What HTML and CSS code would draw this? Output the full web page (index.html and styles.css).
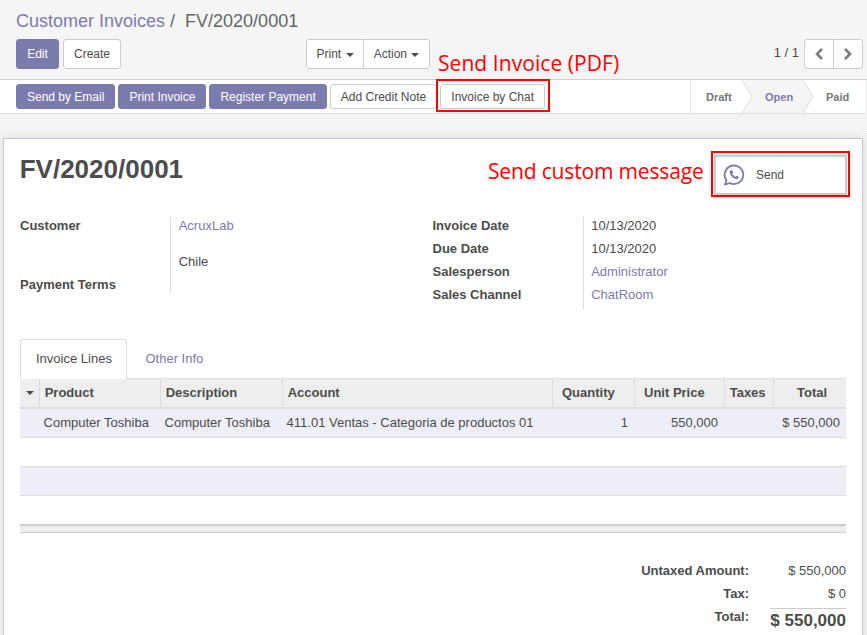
FILE: index.html
```html
<!DOCTYPE html>
<html lang="en">
<head>
<meta charset="utf-8">
<title>FV/2020/0001</title>
<link rel="stylesheet" href="styles.css">
</head>
<body>
<div class="page">
  <header class="control">
    <h1 class="crumbs"><a>Customer Invoices</a><span class="sep">/</span><span class="cur">FV/2020/0001</span></h1>
    <div class="actions">
      <div class="left">
        <button class="btn primary edit">Edit</button>
        <button class="btn create">Create</button>
      </div>
      <div class="group mid">
        <button class="btn print">Print <i class="caret"></i></button>
        <button class="btn action">Action <i class="caret"></i></button>
      </div>
      <div class="pager">
        <span class="count">1 / 1</span>
        <div class="group">
          <button class="btn arrow"><svg width="10" height="14" viewBox="0 0 10 14"><path d="M8 2 3 7l5 5" fill="none" stroke="#7c7c7c" stroke-width="2.600"/></svg></button>
          <button class="btn arrow"><svg width="10" height="14" viewBox="0 0 10 14"><path d="m2 2 5 5-5 5" fill="none" stroke="#7c7c7c" stroke-width="2.600"/></svg></button>
        </div>
      </div>
    </div>
  </header>

  <div class="statusbar">
    <div class="sb-buttons">
      <button class="btn primary small">Send by Email</button>
      <button class="btn primary small">Print Invoice</button>
      <button class="btn primary small">Register Payment</button>
      <button class="btn small">Add Credit Note</button>
      <button class="btn small chat">Invoice by Chat</button>
    </div>
    <div class="steps">
      <div class="step">Draft<svg class="chev" width="10" height="33" viewBox="0 0 10 33"><path d="M0 0 10 16.500 0 33Z" fill="#fff"/><path d="M0 0 10 16.500 0 33" fill="none" stroke="#dcdcdc"/></svg></div>
      <div class="step current">Open<svg class="chev" width="10" height="33" viewBox="0 0 10 33"><path d="M0 0 10 16.500 0 33Z" fill="#f5f5f5"/><path d="M0 0 10 16.500 0 33" fill="none" stroke="#dcdcdc"/></svg></div>
      <div class="step">Paid</div>
    </div>
  </div>

  <main class="backdrop">
    <section class="sheet">
      <div class="head">
        <h2 class="title">FV/2020/0001</h2>
        <button class="stat">
          <svg width="22" height="22" viewBox="0 0 22 22" class="wa"><path d="M11 1.500a9.300 9.300 0 0 1 0 18.600c-1.600 0-3-.4-4.300-1.100l-4.700 1.700 1.400-4.500A9.300 9.300 0 0 1 11 1.500Z" fill="none" stroke="#7c7bad" stroke-width="1.800" stroke-linejoin="round"/><path d="M8 6.200c-1 .5-1.500 1.500-1.200 2.700.7 2.900 3.200 5.400 6.100 6.100 1.200.3 2.200-.2 2.700-1.200l.2-1-2.300-1.100-1 1.100c-1.400-.5-2.800-1.900-3.300-3.300l1.100-1L9 6.200Z" fill="#7c7bad"/></svg>
          <span>Send</span>
        </button>
      </div>

      <div class="info">
        <dl class="fields fields-left">
          <dt>Customer</dt>
          <dd><a>AcruxLab</a><span class="address">Chile</span></dd>
          <dt>Payment Terms</dt>
          <dd></dd>
        </dl>
        <dl class="fields fields-right">
          <dt>Invoice Date</dt><dd>10/13/2020</dd>
          <dt>Due Date</dt><dd>10/13/2020</dd>
          <dt>Salesperson</dt><dd><a>Administrator</a></dd>
          <dt>Sales Channel</dt><dd><a>ChatRoom</a></dd>
        </dl>
      </div>

      <nav class="tabs">
        <a class="tab active">Invoice Lines</a>
        <a class="tab">Other Info</a>
      </nav>

      <table class="lines">
        <colgroup>
          <col class="c0"><col class="c1"><col class="c2"><col class="c3"><col class="c4"><col class="c5"><col class="c6"><col class="c7">
        </colgroup>
        <thead>
          <tr>
            <th class="handle"><i class="caret dark"></i></th>
            <th>Product</th><th>Description</th><th>Account</th>
            <th class="wide">Quantity</th><th class="wide">Unit Price</th><th>Taxes</th><th class="total">Total</th>
          </tr>
        </thead>
        <tbody>
          <tr class="odd">
            <td></td><td>Computer Toshiba</td><td>Computer Toshiba</td><td>411.01 Ventas - Categoria de productos 01</td>
            <td class="num">1</td><td class="num">550,000</td><td></td><td class="num">$ 550,000</td>
          </tr>
          <tr><td colspan="8"></td></tr>
          <tr class="odd"><td colspan="8"></td></tr>
          <tr class="last"><td colspan="8"></td></tr>
        </tbody>
        <tfoot><tr><td colspan="8"></td></tr></tfoot>
      </table>

      <div class="totals">
        <div class="t-label">Untaxed Amount:</div><div class="t-val">$ 550,000</div>
        <div class="t-label">Tax:</div><div class="t-val">$ 0</div>
        <div class="t-label">Total:</div><div class="t-val grand">$ 550,000</div>
      </div>
    </section>
  </main>

  <div class="note note-pdf">Send Invoice (PDF)</div>
  <div class="redbox box-chat"></div>
  <div class="note note-msg">Send custom message</div>
  <div class="redbox box-send"></div>
</div>
</body>
</html>
```
FILE: styles.css
```css
* { box-sizing: border-box; }
html, body { margin: 0; padding: 0; }
body {
  font-family: "Liberation Sans", Arial, sans-serif;
  font-size: 13px;
  line-height: 1.5;
  color: #4c4c4c;
  background: #fff;
}
a { color: #7c7bad; }
button { font-family: inherit; }

.page { position: relative; width: 867px; height: 635px; overflow: hidden; background: #f5f5f5; }

/* control panel */
.control {
  height: 80px;
  padding: 8px 4px 0 16px;
  background: #f5f5f5;
  border-bottom: 1px solid #cfcfcf;
}
.crumbs { margin: 0; height: 31px; font-size: 18px; font-weight: 400; line-height: 27px; color: #666; }
.crumbs .sep { margin: 0 10px 0 5px; }
.actions { display: flex; align-items: flex-start; }
.left { display: flex; gap: 4px; width: 290px; }
.mid { margin-right: auto; }
.pager { display: flex; align-items: flex-start; gap: 5px; }
.count { line-height: 28px; color: #4c4c4c; }

.btn {
  height: 30px;
  padding: 0 10px;
  font-size: 12px;
  line-height: 18px;
  color: #4c4c4c;
  background: #fff;
  border: 1px solid #ccc;
  border-radius: 3px;
  white-space: nowrap;
}
.btn.primary { color: #fff; background: #7c7bad; border-color: #7c7bad; }
.edit { width: 43px; padding: 0; }
.create { width: 58px; padding: 0; }
.group { display: flex; }
.group .btn { border-radius: 0; }
.group .btn:first-child { border-radius: 3px 0 0 3px; }
.group .btn:last-child { margin-left: -1px; border-radius: 0 3px 3px 0; }
.group .print { width: 58px; padding: 0; }
.group .action { width: 67px; padding: 0; }
.arrow { width: 30px; padding: 0; display: flex; align-items: center; justify-content: center; }
.caret {
  display: inline-block;
  width: 0;
  height: 0;
  margin-left: 1px;
  vertical-align: middle;
  border-top: 4px solid #4c4c4c;
  border-left: 4px solid transparent;
  border-right: 4px solid transparent;
}

/* status bar */
.statusbar {
  display: flex;
  justify-content: space-between;
  height: 34px;
  margin-right: 2px;
  padding-left: 16px;
  background: #fff;
  border-bottom: 1px solid #dcdcdc;
}
.sb-buttons { display: flex; gap: 3px; padding-top: 4px; }
.sb-buttons .btn.small { height: 25px; padding: 0 10px; }
.sb-buttons .btn.chat { width: 105px; padding: 0; }
.steps { display: flex; height: 33px; border-left: 1px solid #e4e4e4; margin-right: 1px; }
.step {
  position: relative;
  width: 51px;
  padding-left: 15px;
  font-size: 11px;
  font-weight: 700;
  line-height: 35px;
  color: #777;
}
.step.current { width: 61px; padding-left: 23px; color: #7c7bad; background: #f5f5f5; }
.step:last-child { width: 61px; padding-left: 23px; }
.chev { position: absolute; top: 0; left: 100%; z-index: 1; }

/* backdrop and sheet */
.backdrop {
  height: 521px;
  padding: 24px 4px 0 3px;
  background-color: #f4f4f4;
  background-image: conic-gradient(#eee 25%, #f9f9f9 0 50%, #eee 0 75%, #f9f9f9 0);
  background-size: 2px 2px;
}
.sheet {
  height: 510px;
  padding: 15px 16px 0 16px;
  background: #fff;
  border: 1px solid #c8c8d4;
  box-shadow: 0 0 8px rgba(0, 0, 0, 0.1);
}
.head { display: flex; justify-content: space-between; align-items: flex-start; height: 63px; }
.title { margin: 0 0 0 -0.3px; font-size: 26px; font-weight: 700; line-height: 30px; color: #4c4c4c; }
.stat {
  display: flex;
  align-items: center;
  gap: 11px;
  width: 133px;
  height: 40px;
  margin: 1px -1px 0 0;
  padding: 0 0 1px 7px;
  font-size: 12px;
  color: #4c4c4c;
  background: #fff;
  border: 2px solid #ccc;
}
.wa { flex: none; margin-top: 1px; }

.info { display: flex; height: 122px; }
.fields { margin: 0; display: grid; grid-template-columns: 151px 1fr; grid-auto-rows: 23px; align-content: start; }
.fields dt { font-weight: 700; line-height: 18px; border-right: 1px solid #ddd; }
.fields dd { margin: 0; padding-left: 7.7px; line-height: 18px; }
.fields-left { width: 413px; grid-template-rows: 59px 18px; }
.fields-right { width: 414px; }
.address { display: block; margin-top: 18px; }

/* tabs */
.tabs { display: flex; height: 39px; }
.tab { padding: 11px 15px 0 18.500px; line-height: 18px; white-space: nowrap; }
.tab.active {
  width: 107px;
  padding: 10px 15px 0;
  color: #4c4c4c;
  background: #fff;
  border: 1px solid #ddd;
  border-bottom: 0;
  border-radius: 3px 3px 0 0;
  position: relative;
  z-index: 1;
  margin-bottom: -1px;
}

/* table */
.lines { width: 826px; border-collapse: separate; border-spacing: 0; table-layout: fixed; }
.c0 { width: 19px; } .c1 { width: 121px; } .c2 { width: 122px; } .c3 { width: 270px; }
.c4 { width: 82px; } .c5 { width: 90px; } .c6 { width: 49px; } .c7 { width: 73px; }
.lines th {
  height: 31px;
  padding: 0 0 1px 4.700px;
  font-weight: 700;
  text-align: left;
  background: #eee;
  border-top: 1px solid #ddd;
  border-bottom: 2px solid #ddd;
  border-left: 1px solid #ddd;
  white-space: nowrap;
}
.lines th:first-child { border-left: 0; }
.lines th.wide { padding-left: 9px; }
.lines th.total { padding-left: 23px; }
.lines th.handle { padding: 0 0 1px; text-align: center; }
.caret.dark { margin: 0; border-top-color: #4c4c4c; }
.lines td { height: 29px; padding: 0 6px 1px 4.600px; border-bottom: 1px solid #ddd; white-space: nowrap; }
.lines .odd td { background: #eeeef6; }
.lines .num { text-align: right; }
.lines .last td { height: 28px; border-bottom: 0; }
.lines tfoot td { height: 9px; padding: 0; border-top: 2px solid #ccc; border-bottom: 1px solid #ccc; background: #eee; }

/* totals */
.totals {
  display: grid;
  grid-template-columns: 1fr 76px;
  grid-auto-rows: 23px;
  width: 826px;
  margin-top: 27px;
  text-align: right;
}
.t-label { margin-right: 21px; font-weight: 700; line-height: 22px; }
.t-val { line-height: 22px; }
.t-val.grand {
  margin-top: 2px;
  font-size: 17px;
  font-weight: 700;
  line-height: 23px;
  border-top: 1px solid #ccc;
}

/* annotations on top of the screenshot */
.note {
  position: absolute;
  font-family: "Open Sans", "Noto Sans", sans-serif;
  font-size: 21px;
  line-height: 28px;
  color: #f00;
  white-space: nowrap;
}
.note-pdf { left: 438px; top: 49px; letter-spacing: 0.06px; }
.note-msg { left: 488px; top: 157px; letter-spacing: -0.16px; }
.redbox { position: absolute; border: 2px solid #f00; }
.box-chat { left: 436px; top: 79px; width: 114px; height: 33px; }
.box-send { left: 711px; top: 151px; width: 139px; height: 46px; }
```
